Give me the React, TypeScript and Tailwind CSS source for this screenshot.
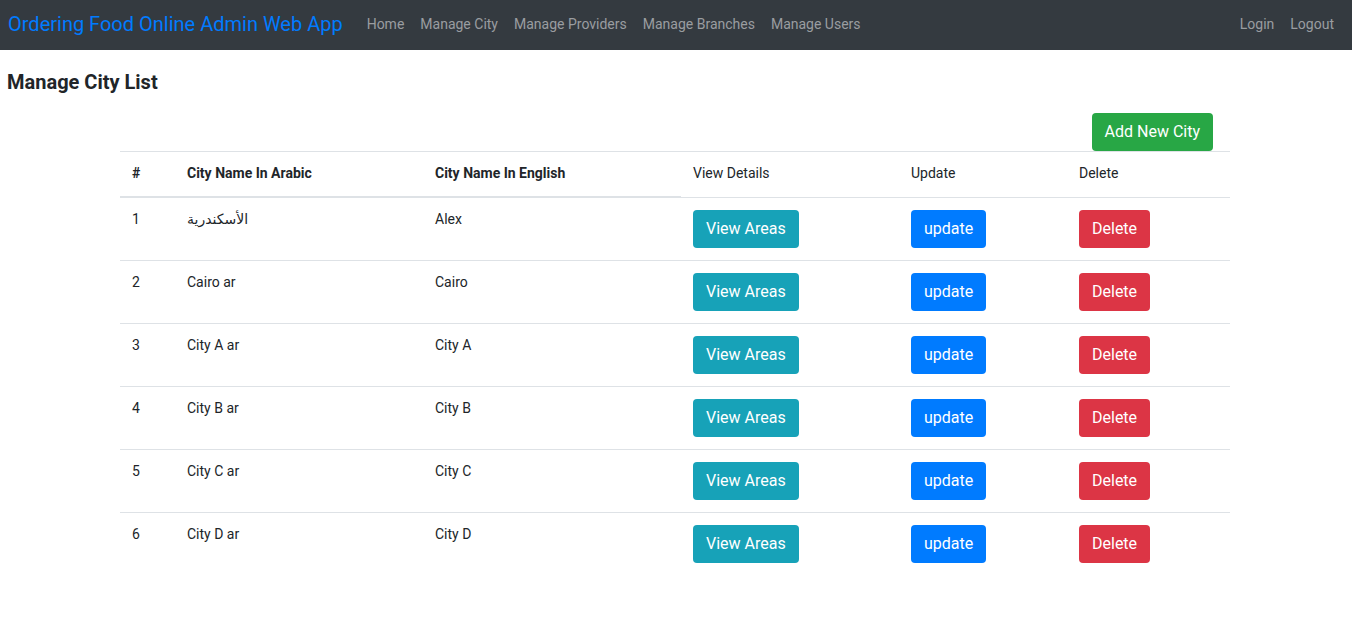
import React from 'react';

interface City {
  id: number;
  nameAr: string;
  nameEn: string;
}

const CITIES: City[] = [
  { id: 1, nameAr: 'الأسكندرية', nameEn: 'Alex' },
  { id: 2, nameAr: 'Cairo ar', nameEn: 'Cairo' },
  { id: 3, nameAr: 'City A ar', nameEn: 'City A' },
  { id: 4, nameAr: 'City B ar', nameEn: 'City B' },
  { id: 5, nameAr: 'City C ar', nameEn: 'City C' },
  { id: 6, nameAr: 'City D ar', nameEn: 'City D' },
];

const NAV_LINKS = ['Home', 'Manage City', 'Manage Providers', 'Manage Branches', 'Manage Users'];

function App() {
  return (
    <div className="min-h-screen bg-white text-[#212529] font-['Roboto','Noto_Sans','DejaVu_Sans',sans-serif] text-[14px] leading-[1.5]">
      {/* navbar */}
      <nav className="h-[50px] bg-[#343a40] flex items-center pl-[8px] pr-[10px] pb-[2px]">
        <a className="text-[20px] text-[#007bff] mr-[16px] leading-[1.5]">Ordering Food Online Admin Web App</a>
        <div className="flex">
          {NAV_LINKS.map((l) => (
            <a key={l} className="px-[8px] text-[14px] text-[#9a9da0]">{l}</a>
          ))}
        </div>
        <div className="ml-auto flex">
          <a className="px-[8px] text-[14px] text-[#9a9da0]">Login</a>
          <a className="px-[8px] text-[14px] text-[#9a9da0]">Logout</a>
        </div>
      </nav>

      <h4 className="mt-[20px] ml-[7px] text-[20px] font-bold leading-[24px]">Manage City List</h4>

      <div className="w-[1110px] ml-[120px]">
        <div className="flex justify-end mt-[19px] pr-[17px]">
          <button className="h-[38px] px-[13px] rounded-[4px] bg-[#28a745] text-white text-[16px]">Add New City</button>
        </div>

        <table className="w-full border-collapse text-left">
          <thead>
            <tr className="border-t border-[#dee2e6]">
              <th className="w-[55px] px-[12px] pt-[11px] pb-[12px] font-bold border-b-2 border-[#dee2e6]">#</th>
              <th className="w-[248px] px-[12px] pt-[11px] pb-[12px] font-bold border-b-2 border-[#dee2e6]">City Name In Arabic</th>
              <th className="w-[258px] px-[12px] pt-[11px] pb-[12px] font-bold border-b-2 border-[#dee2e6]">City Name In English</th>
              <td className="w-[218px] px-[12px] pt-[11px] pb-[12px]">View Details</td>
              <td className="w-[168px] px-[12px] pt-[11px] pb-[12px]">Update</td>
              <td className="px-[12px] pt-[11px] pb-[12px]">Delete</td>
            </tr>
          </thead>
          <tbody>
            {CITIES.map((c) => (
              <tr key={c.id} className="border-t border-[#dee2e6]">
                <td className="px-[12px] pt-[11px] pb-[12px] align-top">{c.id}</td>
                <td className="px-[12px] pt-[11px] pb-[12px] align-top">{c.nameAr}</td>
                <td className="px-[12px] pt-[11px] pb-[12px] align-top">{c.nameEn}</td>
                <td className="px-[12px] py-[12px] align-top">
                  <button className="h-[38px] px-[13px] rounded-[4px] bg-[#17a2b8] text-white text-[16px]">View Areas</button>
                </td>
                <td className="px-[12px] py-[12px] align-top">
                  <button className="h-[38px] px-[13px] rounded-[4px] bg-[#007bff] text-white text-[16px]">update</button>
                </td>
                <td className="px-[12px] py-[12px] align-top">
                  <button className="h-[38px] px-[13px] rounded-[4px] bg-[#dc3545] text-white text-[16px]">Delete</button>
                </td>
              </tr>
            ))}
          </tbody>
        </table>
      </div>
    </div>
  );
}

export default App;
